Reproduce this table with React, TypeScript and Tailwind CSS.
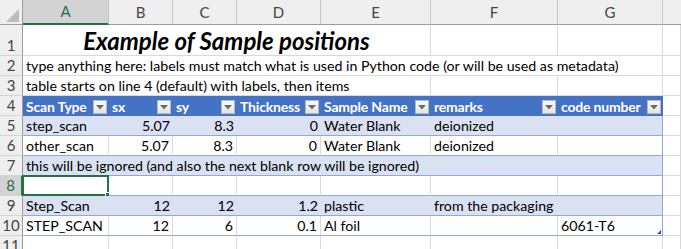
import React from "react";

// column widths of the sheet, A..G, then the sliver of H at the right edge
const COLS = [
  { name: "A", w: "w-[86px]" },
  { name: "B", w: "w-[64px]" },
  { name: "C", w: "w-[64px]" },
  { name: "D", w: "w-[84px]" },
  { name: "E", w: "w-[110px]" },
  { name: "F", w: "w-[127px]" },
  { name: "G", w: "w-[105px]" },
];

const HEADERS = ["Scan Type", "sx", "sy", "Thickness", "Sample Name", "remarks", "code number"];

type Row = { n: number; cells: (string | number)[]; band: boolean };

const DATA: Row[] = [
  { n: 5, cells: ["step_scan", 5.07, 8.3, 0, "Water Blank", "deionized", ""], band: true },
  { n: 6, cells: ["other_scan", 5.07, 8.3, 0, "Water Blank", "deionized", ""], band: false },
];

const DATA2: Row[] = [
  { n: 9, cells: ["Step_Scan", 12, 12, 1.2, "plastic", "from the packaging", ""], band: true },
  { n: 10, cells: ["STEP_SCAN", 12, 6, 0.1, "Al foil", "", "6061-T6"], band: false },
];

const font = "font-[Lato,'Noto_Sans',sans-serif]";

function RowNum({ n, selected }: { n: number; selected?: boolean }) {
  return (
    <div
      className={
        "w-[23px] shrink-0 flex items-end justify-center pb-px text-[15px] leading-[18px] border-b border-[#d5d5d5] " +
        (selected
          ? "bg-[#d2d2d2] text-[#217346] border-r-2 border-r-[#217346]"
          : "bg-[#efefef] text-[#444] border-r border-r-[#9b9b9b]")
      }
    >
      {n}
    </div>
  );
}

function Grid({ w, className = "" }: { w: string; className?: string }) {
  return <div className={`${w} shrink-0 border-r border-b border-[#d9d9d9] ${className}`} />;
}

function FilterButton() {
  return (
    <div className="ml-auto mr-[2px] mb-[2px] w-[14px] h-[14px] shrink-0 flex items-center justify-center bg-gradient-to-b from-[#fbfbfb] to-[#e4e4e4] border border-[#b9b9b9]">
      <svg width="8" height="5" viewBox="0 0 8 5">
        <path d="M0 0h8L4 4.5z" fill="#6b6b6b" />
      </svg>
    </div>
  );
}

function DataRow({ row }: { row: Row }) {
  return (
    <div className="flex h-[20px]">
      <RowNum n={row.n} />
      {COLS.map((c, i) => {
        const v = row.cells[i];
        const isNum = typeof v === "number";
        const last = i === COLS.length - 1;
        return (
          <div
            key={c.name}
            className={
              `${c.w} shrink-0 relative flex items-end px-[3px] leading-[18px] whitespace-nowrap border-b border-b-[#8ea9db] ` +
              (isNum ? "justify-end " : "") +
              (row.band ? "bg-[#d9e1f2] " : "bg-white ") +
              (last
                ? "border-r border-r-[#8ea9db]"
                : row.band
                  ? ""
                  : "border-r border-r-[#d9d9d9]")
            }
          >
            {v}
            {last && row.n === 10 && (
              <svg className="absolute right-[1px] bottom-[1px]" width="4" height="4" viewBox="0 0 4 4">
                <path d="M4 0v4H0z" fill="#2f5597" />
              </svg>
            )}
          </div>
        );
      })}
      <Grid w="w-[18px]" />
    </div>
  );
}

export default function App() {
  return (
    <div className={`w-[681px] h-[249px] overflow-hidden bg-white text-[14.2px] text-black ${font}`}>
      {/* column letters */}
      <div className="flex h-[25px] bg-[#efefef] text-[#444] text-[15px]">
        <div className="w-[23px] shrink-0 relative border-r border-b border-[#9b9b9b]">
          <svg className="absolute left-[6px] top-[9px]" width="13" height="13" viewBox="0 0 13 13">
            <path d="M13 0v13H0z" fill="#bcbcbc" />
          </svg>
        </div>
        {COLS.map((c, i) => (
          <div
            key={c.name}
            className={
              `${c.w} shrink-0 flex items-center justify-center border-r border-r-[#c9c9c9] ` +
              (i === 0
                ? "bg-[#d2d2d2] text-[#217346] border-b-2 border-b-[#217346]"
                : "border-b border-b-[#9b9b9b]")
            }
          >
            {c.name}
          </div>
        ))}
        <div className="w-[18px] shrink-0 border-b border-[#9b9b9b]" />
      </div>

      {/* row 1: title, merged A:E */}
      <div className="flex h-[31px]">
        <RowNum n={1} />
        <div className="w-[408px] shrink-0 flex items-end justify-center border-r border-b border-[#d9d9d9]">
          <span className="text-[24px] leading-[29px] font-bold italic">Example of Sample positions</span>
        </div>
        <Grid w="w-[127px]" />
        <Grid w="w-[105px]" />
        <Grid w="w-[18px]" />
      </div>

      {/* row 2 */}
      <div className="flex h-[20px]">
        <RowNum n={2} />
        <div className="w-[640px] shrink-0 flex items-end px-[3px] leading-[18px] whitespace-nowrap border-r border-b border-[#d9d9d9]">
          type anything here: labels must match what is used in Python code (or will be used as metadata)
        </div>
        <Grid w="w-[18px]" />
      </div>

      {/* row 3 */}
      <div className="flex h-[20px]">
        <RowNum n={3} />
        <div className="w-[408px] shrink-0 flex items-end px-[3px] leading-[18px] whitespace-nowrap border-r border-b border-[#d9d9d9]">
          table starts on line 4 (default) with labels, then items
        </div>
        <Grid w="w-[127px]" />
        <Grid w="w-[105px]" />
        <Grid w="w-[18px]" />
      </div>

      {/* row 4: table header */}
      <div className="flex h-[20px]">
        <RowNum n={4} />
        {COLS.map((c, i) => (
          <div
            key={c.name}
            className={`${c.w} shrink-0 flex items-end pl-[3px] leading-[18px] whitespace-nowrap bg-[#4472c4] text-white font-bold text-[14px] tracking-[-0.2px]`}
          >
            <span>{HEADERS[i]}</span>
            <FilterButton />
          </div>
        ))}
        <Grid w="w-[18px]" />
      </div>

      {DATA.map((r) => (
        <DataRow key={r.n} row={r} />
      ))}

      {/* row 7: banded, text overflows across the table */}
      <div className="flex h-[20px]">
        <RowNum n={7} />
        <div className="w-[640px] shrink-0 flex items-end px-[3px] leading-[18px] whitespace-nowrap bg-[#d9e1f2] border-r border-b border-[#8ea9db]">
          this will be ignored (and also the next blank row will be ignored)
        </div>
        <Grid w="w-[18px]" />
      </div>

      {/* row 8: blank table row with the active cell in A */}
      <div className="flex h-[20px]">
        <RowNum n={8} selected />
        {COLS.map((c, i) => {
          const last = i === COLS.length - 1;
          return (
            <div
              key={c.name}
              className={
                `${c.w} shrink-0 relative bg-white border-b border-b-[#8ea9db] border-r ` +
                (last ? "border-r-[#8ea9db]" : "border-r-[#d9d9d9]")
              }
            >
              {i === 0 && (
                <>
                  <div className="absolute -left-px -top-px -right-px -bottom-px border-2 border-[#217346]" />
                  <div className="absolute -right-[4px] -bottom-[4px] w-[7px] h-[7px] bg-[#217346] border border-white" />
                </>
              )}
            </div>
          );
        })}
        <Grid w="w-[18px]" />
      </div>

      {DATA2.map((r) => (
        <DataRow key={r.n} row={r} />
      ))}

      {/* row 11 */}
      <div className="flex h-[20px]">
        <RowNum n={11} />
        {COLS.map((c) => (
          <Grid key={c.name} w={c.w} />
        ))}
        <Grid w="w-[18px]" />
      </div>
    </div>
  );
}
